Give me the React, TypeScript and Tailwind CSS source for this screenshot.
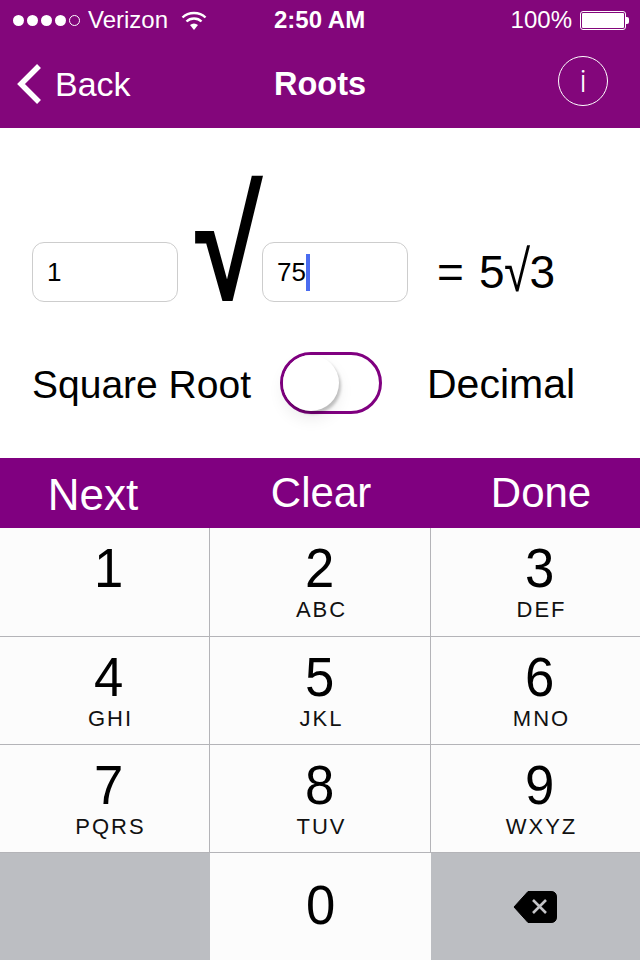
import React from "react";

const keys = [
  { n: "1", l: "" },
  { n: "2", l: "ABC" },
  { n: "3", l: "DEF" },
  { n: "4", l: "GHI" },
  { n: "5", l: "JKL" },
  { n: "6", l: "MNO" },
  { n: "7", l: "PQRS" },
  { n: "8", l: "TUV" },
  { n: "9", l: "WXYZ" },
];

const Key = ({ n, l, col, first }: { n: string; l: string; col: number; first: boolean }) => {
  const pad = col === 1 ? "" : "pl-[9px]";
  const edge = col === 2 ? "" : "border-r border-[#b4b4b8]";
  const height = first ? "h-[109px]" : "h-[108px]";
  return (
    <div className={`${height} border-b border-[#b4b4b8] bg-[#fcfcfc] flex flex-col items-center ${pad} ${edge}`}>
      <span className="mt-[12px] text-[56px] leading-[56px] scale-x-[0.94] text-black">{n}</span>
      <span className="mt-[2px] pl-[3px] text-[22px] leading-[24px] tracking-[2px] text-[#111]">{l}</span>
    </div>
  );
};

const App = () => {
  return (
    <div className="w-[640px] h-[960px] overflow-hidden bg-white font-['Liberation_Sans',Arial,sans-serif]">
      {/* status + nav */}
      <div className="h-[128px] bg-[#83067b] text-white">
        <div className="h-[40px] flex items-center text-[24px] pl-[13px] pr-[11px]">
          <div className="flex items-center gap-[3px] w-[75px]">
            <span className="w-[11px] h-[11px] rounded-full bg-white" />
            <span className="w-[11px] h-[11px] rounded-full bg-white" />
            <span className="w-[11px] h-[11px] rounded-full bg-white" />
            <span className="w-[11px] h-[11px] rounded-full bg-white" />
            <span className="w-[11px] h-[11px] rounded-full border border-white" />
          </div>
          <span className="w-[93px]">Verizon</span>
          <svg width="26" height="20" viewBox="0 0 26 20" className="w-[26px]">
            <path d="M1.5 7.5C7.5 1.5 18.5 1.5 24.5 7.5" fill="none" stroke="white" strokeWidth="2.4" />
            <path d="M5.5 11.5C9.5 7.5 16.5 7.5 20.5 11.5" fill="none" stroke="white" strokeWidth="2.4" />
            <path d="M9 15C11.5 13 14.5 13 17 15L13 20Z" fill="white" />
          </svg>
          <span className="ml-[67px] font-bold">2:50 AM</span>
          <span className="ml-auto">100%</span>
          <div className="ml-[8px] flex items-center">
            <div className="w-[46px] h-[19px] border border-white rounded-[3px] p-[1px]">
              <div className="w-full h-full bg-white rounded-[1px]" />
            </div>
            <div className="w-[3px] h-[7px] bg-white rounded-r-[2px]" />
          </div>
        </div>
        <div className="h-[88px] relative flex items-center justify-between pl-[16px] pr-[32px]">
          <div className="flex items-center gap-[13px]">
            <svg width="26" height="42" viewBox="0 0 26 42">
              <path d="M23 3L5 21L23 39" fill="none" stroke="white" strokeWidth="5.5" />
            </svg>
            <span className="text-[34px] leading-none">Back</span>
          </div>
          <span className="absolute left-[274px] mt-[1px] text-[32.5px] leading-none font-bold">Roots</span>
          <div className="w-[50px] h-[50px] mt-[-6px] rounded-full border-[1.5px] border-white flex items-center justify-center">
            <span className="text-[32px] leading-none font-['Roboto'] font-light">i</span>
          </div>
        </div>
      </div>

      {/* entry */}
      <div className="h-[330px] pt-[114px] pl-[32px]">
        <div className="flex items-center h-[60px]">
          <div className="w-[146px] h-[60px] rounded-[12px] border border-[#cdcdcd] flex items-center pl-[14px] text-[26px] text-black">
            1
          </div>
          <div className="w-[84px] h-[60px] relative">
            <span className="absolute left-[17px] bottom-[-21px] text-[156px] leading-none font-bold text-black origin-left scale-x-[0.79]">√</span>
          </div>
          <div className="w-[146px] h-[60px] rounded-[12px] border border-[#cdcdcd] flex items-center pl-[14px] text-[26px] text-black">
            75
            <span className="w-[4px] h-[37px] bg-[#4a6cf0]" />
          </div>
          <div className="ml-[29px] flex items-center text-[46px] leading-none text-black">
            <span>=</span>
            <span className="ml-[15px]">5</span>
            <span className="inline-block w-[25px] text-[58px] leading-none origin-left scale-x-[0.82] mt-[-3px]">√</span>
            <span>3</span>
          </div>
        </div>
        <div className="mt-[50px] flex items-center h-[62px]">
          <span className="w-[248px] mt-[2px] text-[39px] leading-none text-black">Square Root</span>
          <div className="w-[102px] h-[62px] rounded-full border-[3px] border-[#800080] bg-white">
            <div className="w-[56px] h-[56px] rounded-full bg-white shadow-[2px_3px_3px_rgba(0,0,0,0.22),0_8px_16px_rgba(0,0,0,0.08)]" />
          </div>
          <span className="ml-[45px] mt-[2px] text-[41px] leading-none text-black">Decimal</span>
        </div>
      </div>

      {/* toolbar */}
      <div className="h-[70px] bg-[#800080] text-white grid grid-cols-[186px_270px_170px] items-center text-center text-[42px] leading-none">
        <span className="text-[44px] mt-[4px]">Next</span>
        <span>Clear</span>
        <span>Done</span>
      </div>

      {/* keypad */}
      <div className="grid grid-cols-[210px_221px_209px]">
        {keys.map((k, i) => (
          <Key key={k.n} n={k.n} l={k.l} col={i % 3} first={i < 3} />
        ))}
        <div className="h-[107px] bg-[#bcbec2]" />
        <div className="h-[107px] bg-[#fcfcfc] flex justify-center">
          <span className="mt-[24px] text-[56px] leading-[56px] scale-x-[0.94] text-black">0</span>
        </div>
        <div className="h-[107px] bg-[#bcbec2] flex items-center justify-center pr-[1px]">
          <svg width="44" height="32" viewBox="0 0 44 32">
            <path d="M15 .5H38C41.5 .5 43.5 2.5 43.5 6V26C43.5 29.5 41.5 31.5 38 31.5H15L1 16Z" fill="black" stroke="black" strokeLinejoin="round" />
            <path d="M20 9L33 22M33 9L20 22" fill="none" stroke="#c4c4c8" strokeWidth="2.6" />
          </svg>
        </div>
      </div>
    </div>
  );
};

export default App;
